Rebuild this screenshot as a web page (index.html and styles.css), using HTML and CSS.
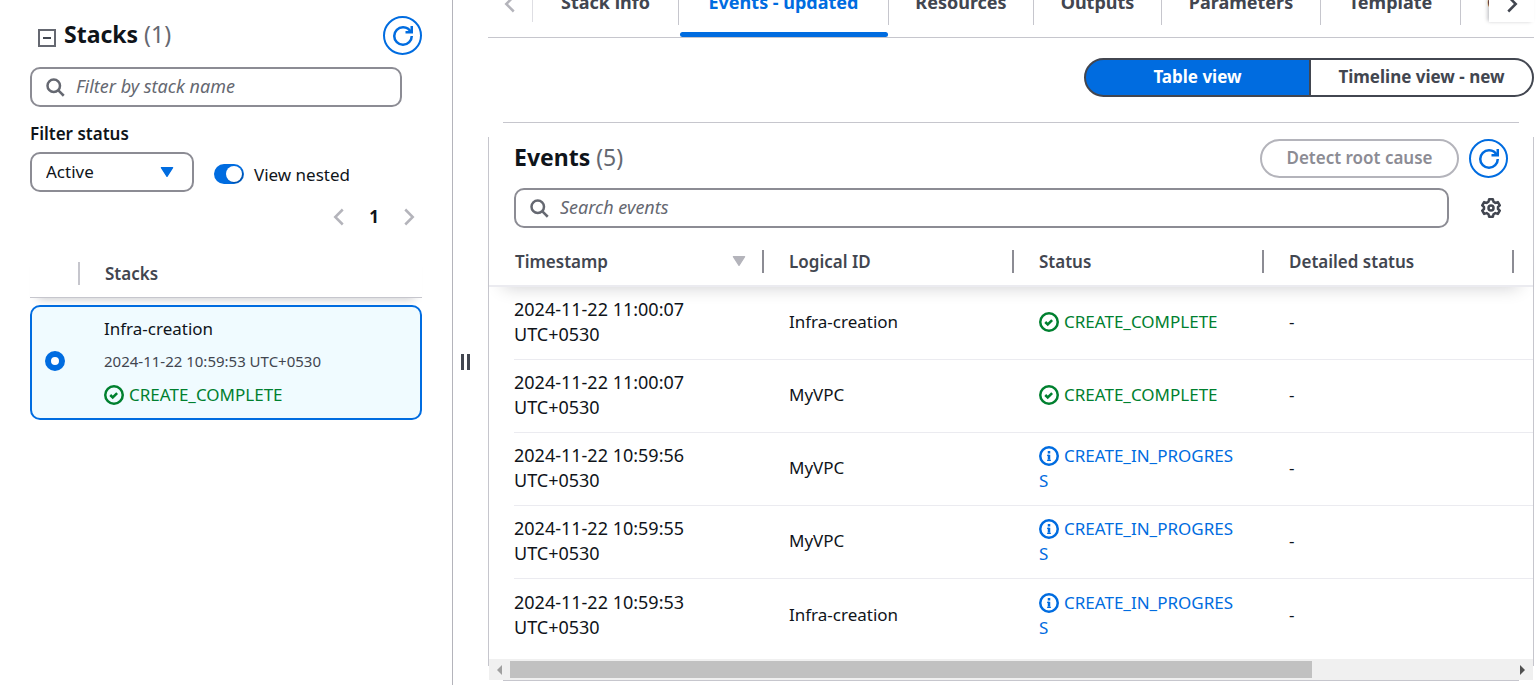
FILE: index.html
```html
<!DOCTYPE html>
<html lang="en">
<head>
<meta charset="utf-8">
<title>CloudFormation - Stack Infra-creation</title>
<link rel="stylesheet" href="styles.css">
</head>
<body>
<svg class="sprite" aria-hidden="true">
  <symbol id="refresh" viewBox="0 0 16 16"><path d="M10 5h5V0"/><path d="M15 8a6.957 6.957 0 0 1-7 7 6.957 6.957 0 0 1-7-7 6.957 6.957 0 0 1 7-7 6.87 6.87 0 0 1 6.3 4"/></symbol>
  <symbol id="search" viewBox="0 0 16 16"><circle cx="7" cy="7" r="5"/><path d="m15 15-4.5-4.5"/></symbol>
  <symbol id="check" viewBox="0 0 16 16"><circle cx="8" cy="8" r="7"/><path d="m5 8 2 2 3.5-3.5"/></symbol>
  <symbol id="info" viewBox="0 0 16 16"><circle cx="8" cy="8" r="7"/><path d="M8 7v4M8 4v2"/><path stroke-width="1" d="M6.500 7.500H8M6.500 11.500h3"/></symbol>
  <symbol id="left" viewBox="0 0 16 16"><path d="M11 2 5 8l6 6"/></symbol>
  <symbol id="right" viewBox="0 0 16 16"><path d="m5 2 6 6-6 6"/></symbol>
  <symbol id="caret" viewBox="0 0 16 16"><path stroke="currentColor" stroke-width="1" stroke-linejoin="round" d="M3.500 4.500h9L8 11.500z"/></symbol>
  <symbol id="gear" viewBox="0 0 16 16"><path stroke-linejoin="round" d="M6.500 1h3l.5 2 1.500.9 2-.6 1.500 2.600L13.600 7.200v1.600l1.400 1.300-1.500 2.600-2-.6L10 13l-.5 2h-3L6 13l-1.500-.9-2 .6L1 10.100l1.400-1.300V7.200L1 5.900l1.500-2.600 2 .6L6 3z"/><circle cx="8" cy="8" r="2"/></symbol>
</svg>
<div class="app">
  <aside class="sidebar">
    <header class="side-head">
      <button class="collapse" aria-label="Collapse stacks"></button>
      <h2>Stacks <span class="count">(1)</span></h2>
      <button class="round" aria-label="Refresh stacks"><svg class="icon"><use href="#refresh"/></svg></button>
    </header>
    <div class="search side-search">
      <svg class="icon"><use href="#search"/></svg>
      <input type="text" placeholder="Filter by stack name" aria-label="Filter by stack name">
    </div>
    <label class="field-label" for="status">Filter status</label>
    <div class="filters">
      <div class="select">
        <select id="status"><option>Active</option></select>
        <svg class="icon solid"><use href="#caret"/></svg>
      </div>
      <label class="toggle"><input type="checkbox" checked>View nested</label>
    </div>
    <nav class="pages" aria-label="Pagination">
      <button aria-label="Previous page" disabled><svg class="icon"><use href="#left"/></svg></button>
      <button class="current">1</button>
      <button aria-label="Next page" disabled><svg class="icon"><use href="#right"/></svg></button>
    </nav>
    <div class="list-head"><span>Stacks</span></div>
    <label class="stack">
      <input type="radio" name="stack" checked>
      <span class="stack-body">
        <span>Infra-creation</span>
        <span class="stamp">2024-11-22 10:59:53 UTC+0530</span>
        <span class="status ok"><svg class="icon"><use href="#check"/></svg>CREATE_COMPLETE</span>
      </span>
    </label>
  </aside>
  <button class="handle" aria-label="Resize panel"></button>
  <main class="content">
    <div class="tabbar">
      <button class="scroll prev" aria-label="Scroll left" disabled><svg class="icon"><use href="#left"/></svg></button>
      <div class="tabs" role="tablist">
        <button role="tab">Stack info</button>
        <button role="tab" class="active" aria-selected="true">Events - updated</button>
        <button role="tab">Resources</button>
        <button role="tab">Outputs</button>
        <button role="tab">Parameters</button>
        <button role="tab">Template</button>
        <button role="tab">Changesets</button>
      </div>
      <button class="scroll next" aria-label="Scroll right"><svg class="icon"><use href="#right"/></svg></button>
    </div>
    <div class="views">
      <button class="selected">Table view</button>
      <button>Timeline view - new</button>
    </div>
    <section class="card">
      <header class="card-head">
        <h2>Events <span class="count">(5)</span></h2>
        <button class="pill" disabled>Detect root cause</button>
        <button class="round" aria-label="Refresh events"><svg class="icon"><use href="#refresh"/></svg></button>
      </header>
      <div class="tools">
        <div class="search">
          <svg class="icon"><use href="#search"/></svg>
          <input type="text" placeholder="Search events" aria-label="Search events">
        </div>
        <button class="settings" aria-label="Preferences"><svg class="icon"><use href="#gear"/></svg></button>
      </div>
      <table>
        <colgroup><col class="first"><col class="mid"><col class="mid"><col class="mid"><col></colgroup>
        <thead>
          <tr>
            <th><div class="th">Timestamp<svg class="icon solid"><use href="#caret"/></svg></div></th>
            <th><div class="th">Logical ID</div></th>
            <th><div class="th">Status</div></th>
            <th><div class="th">Detailed status</div></th>
            <th></th>
          </tr>
        </thead>
        <tbody>
          <tr><td class="time">2024-11-22 11:00:07 UTC+0530</td><td>Infra-creation</td><td><span class="status ok"><svg class="icon"><use href="#check"/></svg>CREATE_COMPLETE</span></td><td>-</td><td></td></tr>
          <tr><td class="time">2024-11-22 11:00:07 UTC+0530</td><td>MyVPC</td><td><span class="status ok"><svg class="icon"><use href="#check"/></svg>CREATE_COMPLETE</span></td><td>-</td><td></td></tr>
          <tr><td class="time">2024-11-22 10:59:56 UTC+0530</td><td>MyVPC</td><td><span class="status busy"><svg class="icon"><use href="#info"/></svg>CREATE_IN_PROGRESS</span></td><td>-</td><td></td></tr>
          <tr><td class="time">2024-11-22 10:59:55 UTC+0530</td><td>MyVPC</td><td><span class="status busy"><svg class="icon"><use href="#info"/></svg>CREATE_IN_PROGRESS</span></td><td>-</td><td></td></tr>
          <tr><td class="time">2024-11-22 10:59:53 UTC+0530</td><td>Infra-creation</td><td><span class="status busy"><svg class="icon"><use href="#info"/></svg>CREATE_IN_PROGRESS</span></td><td>-</td><td></td></tr>
        </tbody>
      </table>
      <div class="scrollbar">
        <svg class="arrow" viewBox="0 0 5 10"><path d="M5 0v10L0 5z"/></svg>
        <div class="track"><div class="thumb"></div></div>
        <svg class="arrow end" viewBox="0 0 5 10"><path d="M0 0v10l5-5z"/></svg>
      </div>
    </section>
  </main>
</div>
</body>
</html>
```
FILE: styles.css
```css
:root {
  --blue: #006ce0;
  --ink: #0f141a;
  --dark: #424650;
  --gray: #656871;
  --edge: #8c8c94;
  --soft: #b4b4bb;
  --line: #c6c6cd;
}
* { box-sizing: border-box; }
body {
  margin: 0;
  background: #fff;
  color: var(--ink);
  font: 17px/25px "Noto Sans", "Open Sans", sans-serif;
}
button, input, select { font: inherit; color: inherit; }
button { background: none; border: 0; padding: 0; }
h2 { margin: 0; padding-bottom: 4px; font-size: 23px; line-height: 30px; font-weight: 700; }
.count { color: var(--gray); font-weight: 400; }
.sprite { display: none; }
.icon {
  width: 20px;
  height: 20px;
  flex: none;
  fill: none;
  stroke: currentColor;
  stroke-width: 2;
}
.icon.solid { fill: currentColor; stroke: none; }
.app { display: flex; height: 100vh; overflow: hidden; }

.sidebar {
  flex: none;
  width: 453px;
  padding: 16px 30px 0;
  border-right: 1px solid var(--soft);
}
.side-head { display: flex; align-items: center; height: 39px; padding-left: 8px; }
.side-head h2 { flex: 1; padding-left: 8px; }
.collapse {
  display: grid;
  place-items: center;
  width: 18px;
  height: 18px;
  margin-top: 5px;
  border: 2px solid var(--gray);
}
.collapse::before { content: ""; width: 8px; height: 2px; background: var(--dark); }
.round {
  display: grid;
  place-items: center;
  flex: none;
  width: 39px;
  height: 39px;
  border: 2px solid var(--blue);
  border-radius: 50%;
  color: var(--blue);
}
.search {
  display: flex;
  align-items: center;
  gap: 11px;
  height: 40px;
  padding: 0 13px;
  border: 2px solid var(--edge);
  border-radius: 10px;
  color: var(--gray);
}
.search input { flex: 1; min-width: 0; border: 0; padding: 0 0 2px; outline: 0; background: none; font-size: 18px; }
.search input::placeholder { color: var(--gray); font-style: italic; opacity: 1; }
.side-search { margin: 12px 20px 0 0; }
.field-label { display: block; margin-top: 14px; font-weight: 600; }
.filters { display: flex; align-items: center; gap: 20px; margin-top: 6px; }
.select { display: flex; align-items: center; position: relative; width: 164px; color: var(--blue); }
.select select {
  appearance: none;
  width: 100%;
  height: 40px;
  padding: 0 14px 2px;
  border: 2px solid var(--edge);
  border-radius: 10px;
  background: #fff;
  color: var(--ink);
}
.select .icon { position: absolute; right: 17px; }
.toggle { display: flex; align-items: center; gap: 10px; padding-top: 4px; }
.toggle input {
  appearance: none;
  display: flex;
  justify-content: flex-end;
  width: 30px;
  height: 20px;
  margin: 0;
  padding: 2px;
  border-radius: 10px;
  background: var(--blue);
}
.toggle input::before {
  content: "";
  width: 16px;
  height: 16px;
  border-radius: 50%;
  background: #fff;
  box-shadow: 1px 1px 1px rgba(0, 7, 22, .3);
}
.pages { display: flex; justify-content: flex-end; gap: 20px; margin-top: 12px; padding-right: 3px; }
.pages button { display: grid; place-items: center; min-width: 20px; height: 25px; color: var(--soft); }
.pages .current { min-width: 10px; color: var(--ink); font-weight: 700; }
.list-head {
  display: flex;
  align-items: center;
  height: 48px;
  margin-top: 21px;
  padding-left: 48px;
  border-bottom: 1px solid var(--line);
  box-shadow: 0 9px 10px -8px rgba(0, 7, 22, .22);
  color: var(--dark);
  font-weight: 600;
}
.list-head span { border-left: 2px solid var(--line); padding-left: 25px; line-height: 23px; }
.stack {
  display: flex;
  align-items: center;
  gap: 39px;
  position: relative;
  height: 115px;
  margin-top: 7px;
  padding: 0 0 3px 13px;
  border: 2px solid var(--blue);
  border-radius: 10px;
  background: #f0fbff;
}
.stack input {
  appearance: none;
  width: 20px;
  height: 20px;
  margin: 0;
  border: 6px solid var(--blue);
  border-radius: 50%;
  background: #fff;
}
.stack-body { display: flex; flex-direction: column; gap: 8px; }
.stamp { font-size: 15px; color: var(--dark); }
.status .icon { vertical-align: -4px; margin-right: 5px; }
.ok { color: #00802f; }
.busy { color: var(--blue); }

.handle {
  flex: none;
  align-self: center;
  width: 9px;
  height: 16px;
  margin: 38px 18px 0 8px;
  border: solid var(--dark);
  border-width: 0 3px;
}
.content { flex: 1; min-width: 0; padding-right: 6px; }
.tabbar {
  display: flex;
  position: relative;
  height: 52px;
  margin-top: -14px;
  border-bottom: 1px solid var(--line);
  color: var(--dark);
}
.scroll { display: flex; align-items: center; justify-content: center; flex: none; height: 36px; }
.prev { width: 45px; border-right: 1px solid #dedee3; color: var(--soft); }
.next {
  position: absolute;
  right: 0;
  width: 45px;
  background: #fff;
  box-shadow: -2px 0 4px -1px rgba(0, 7, 22, .3);
}
.tabs {
  display: grid;
  flex: 1;
  min-width: 0;
  grid-template-columns: 146px 210px 145px 128px 159px 140px 1fr;
}
.tabs button {
  height: 39px;
  padding: 1px 0 7px;
  border-right: 1px solid var(--line);
  font-size: 18px;
  font-weight: 700;
  white-space: nowrap;
}
.tabs button:last-child { padding-left: 26px; border: 0; text-align: left; overflow: hidden; }
.tabs .active { position: relative; margin-bottom: 0; color: var(--blue); }
.active::after {
  content: "";
  position: absolute;
  top: 46px;
  left: 1px;
  right: 0;
  height: 5px;
  border-radius: 3px;
  background: var(--blue);
}
.views { display: flex; justify-content: flex-end; margin-top: 20px; }
.views button {
  height: 39px;
  width: 223px;
  padding-bottom: 2px;
  border: 2px solid var(--dark);
  border-left: 0;
  border-radius: 0 20px 20px 0;
  color: var(--dark);
  font-weight: 700;
}
.views .selected {
  width: 227px;
  border-left: 2px solid var(--dark);
  border-radius: 20px 0 0 20px;
  background: var(--blue);
  color: #fff;
}
.card {
  margin-top: 25px;
  padding: 1px;
  background:
    linear-gradient(var(--line), var(--line)) 50% 0 / calc(100% - 30px) 1px no-repeat,
    linear-gradient(var(--line), var(--line)) 50% 100% / calc(100% - 30px) 1px no-repeat,
    linear-gradient(var(--line), var(--line)) 0 50% / 1px calc(100% - 30px) no-repeat,
    linear-gradient(var(--line), var(--line)) 100% 50% / 1px calc(100% - 30px) no-repeat;
}
.card-head { display: flex; align-items: center; gap: 10px; padding: 16px 25px 0; }
.card-head h2 { flex: 1; }
.pill {
  width: 199px;
  height: 39px;
  padding-bottom: 2px;
  border: 2px solid var(--soft);
  border-radius: 20px;
  color: var(--edge);
  font-weight: 600;
}
.tools { display: flex; align-items: center; padding: 10px 32px 0 25px; }
.tools .search { flex: 1; }
.settings { display: grid; margin-left: 32px; color: var(--dark); }
table { width: 100%; table-layout: fixed; border-collapse: separate; border-spacing: 0; }
.first { width: 275px; }
.mid { width: 250px; }
thead { position: relative; box-shadow: 0 14px 18px -14px rgba(0, 7, 22, .2); }
th { height: 59px; padding: 9px 0 0; border-bottom: 2px solid #ebebf0; text-align: left; font-weight: 600; color: var(--dark); }
.th {
  display: flex;
  justify-content: space-between;
  align-items: center;
  height: 23px;
  padding: 0 13px 0 25px;
  border-right: 2px solid var(--edge);
}
.th .icon { color: var(--soft); }
th:first-child .th { padding-left: 26px; }
td {
  height: 73px;
  padding: 0 25px 3px;
  border-bottom: 1px solid #ebebf0;
  word-break: break-all;
}
td:first-child {
  border: 0;
  background: linear-gradient(#ebebf0, #ebebf0) 25px 100% / 100% 1px no-repeat;
}
tbody tr:last-child td { height: 80px; padding-bottom: 9px; border: 0; background: none; }
td.time { font-size: 18px; word-break: normal; padding-right: 60px; }
.scrollbar { display: flex; align-items: center; height: 21px; padding: 0 8px; background: #f0f0f0; }
.arrow { width: 5px; height: 10px; fill: #a0a0a0; }
.arrow.end { fill: #505050; }
.track { flex: 1; height: 17px; margin: 0 8px; }
.thumb { width: 80%; height: 100%; background: #c1c1c1; }
```
